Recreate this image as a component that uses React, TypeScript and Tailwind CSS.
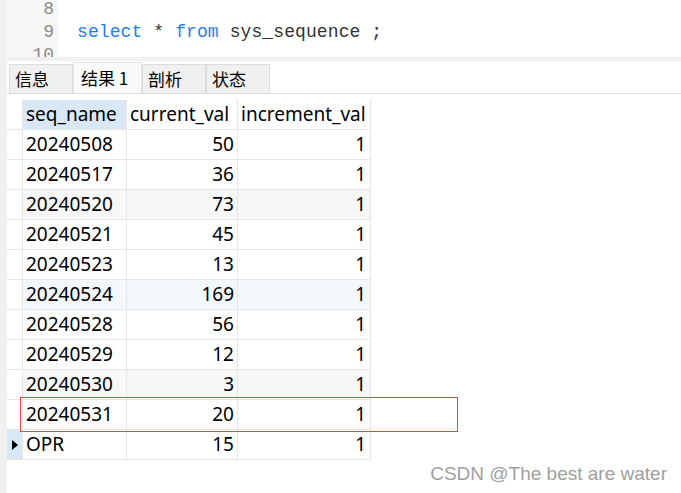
const rows: [string, string, string][] = [
  ['20240508', '50', '1'],
  ['20240517', '36', '1'],
  ['20240520', '73', '1'],
  ['20240521', '45', '1'],
  ['20240523', '13', '1'],
  ['20240524', '169', '1'],
  ['20240528', '56', '1'],
  ['20240529', '12', '1'],
  ['20240530', '3', '1'],
  ['20240531', '20', '1'],
  ['OPR', '15', '1'],
];

const rowBg: Record<number, string> = {
  2: 'bg-[#f7f7f7]',
  5: 'bg-[#f3f8fd]',
  8: 'bg-[#f7f7f7]',
};

const tabs = ['信息', '结果 1', '剖析', '状态'];

export default function App() {
  return (
    <div className="relative flex w-[681px] h-[493px] overflow-hidden bg-white text-black font-['Noto_Sans','Noto_Sans_CJK_SC',sans-serif]">
      <div className="w-[7px] shrink-0 bg-[#f0f0f0]" />
      <div className="flex flex-1 flex-col">
        {/* editor */}
        <div className="flex h-[57px] overflow-hidden font-['Liberation_Mono',monospace] text-[18px] leading-[23px]">
          <div className="w-[51px] shrink-0 bg-[#f7f7f7] pr-[4px] text-right text-[#8a8a8a] -mt-[2px]">
            <div>8</div>
            <div>9</div>
            <div>10</div>
          </div>
          <div className="pl-[19px] -mt-[2px] text-[#333] tracking-[0.1px]">
            <div>&nbsp;</div>
            <div>
              <span className="text-[#1f7ee8]">select</span> * <span className="text-[#1f7ee8]">from</span> sys_sequence ;
            </div>
          </div>
        </div>
        <div className="h-[4px] bg-[#f0f0f0]" />
        {/* tabs */}
        <div className="flex h-[33px] items-end border-b border-[#dcdcdc] pl-[2px]">
          {tabs.map((t, i) =>
            i === 1 ? (
              <div
                key={t}
                className="flex h-[31px] w-[69px] items-center border-x border-t border-[#e2e2e2] bg-[#fafafa] pl-[7px] text-[17px] font-['Noto_Sans_CJK_SC',sans-serif]"
              >
                {t}
              </div>
            ) : (
              <div
                key={t}
                className="flex h-[29px] w-[64px] items-center border border-b-0 border-[#dcdcdc] bg-[#f0f0f0] pl-[5px] text-[17px] font-['Noto_Sans_CJK_SC',sans-serif]"
              >
                {t}
              </div>
            )
          )}
        </div>
        {/* grid */}
        <div className="pt-[6px] text-[19px]">
          <div className="grid w-[364px] grid-cols-[16px_104px_111px_133px]">
            <div className="h-[30px] border-b border-r border-[#e6e6e6]" />
            <div className="flex h-[30px] items-center border-b border-r border-[#e6e6e6] bg-[#d9e8f6] pl-[3px]">seq_name</div>
            <div className="flex h-[30px] items-center border-b border-r border-[#e6e6e6] pl-[3px]">current_val</div>
            <div className="flex h-[30px] items-center border-b border-r border-[#e6e6e6] pl-[3px]">increment_val</div>
            {rows.map((r, i) => {
              const bg = rowBg[i] ?? '';
              const last = i === rows.length - 1;
              return [
                <div
                  key={`i${i}`}
                  className={`flex h-[30px] items-center justify-center border-b border-r border-[#e6e6e6] ${last ? 'bg-[#d9e8f6]' : ''}`}
                >
                  {last && (
                    <svg width="6" height="10" viewBox="0 0 6 10">
                      <path d="M0 0 L6 5 L0 10 Z" fill="#000" />
                    </svg>
                  )}
                </div>,
                <div key={`a${i}`} className={`flex h-[30px] items-center border-b border-r border-[#e6e6e6] pl-[3px] ${bg}`}>
                  {r[0]}
                </div>,
                <div key={`b${i}`} className={`flex h-[30px] items-center justify-end border-b border-r border-[#e6e6e6] pr-[3px] ${bg}`}>
                  {r[1]}
                </div>,
                <div key={`c${i}`} className={`flex h-[30px] items-center justify-end border-b border-r border-[#e6e6e6] pr-[4px] ${bg}`}>
                  {r[2]}
                </div>,
              ];
            })}
          </div>
        </div>
      </div>
      {/* highlight box */}
      <div className="absolute left-[20px] top-[397px] h-[35px] w-[438px] border border-[#e04444]" />
      <div className="absolute right-[14px] bottom-[5px] font-['Liberation_Sans',sans-serif] text-[19px] text-[#a0a0a0] [text-shadow:0_0_1px_#fff]">
        CSDN @The best are water
      </div>
    </div>
  );
}
